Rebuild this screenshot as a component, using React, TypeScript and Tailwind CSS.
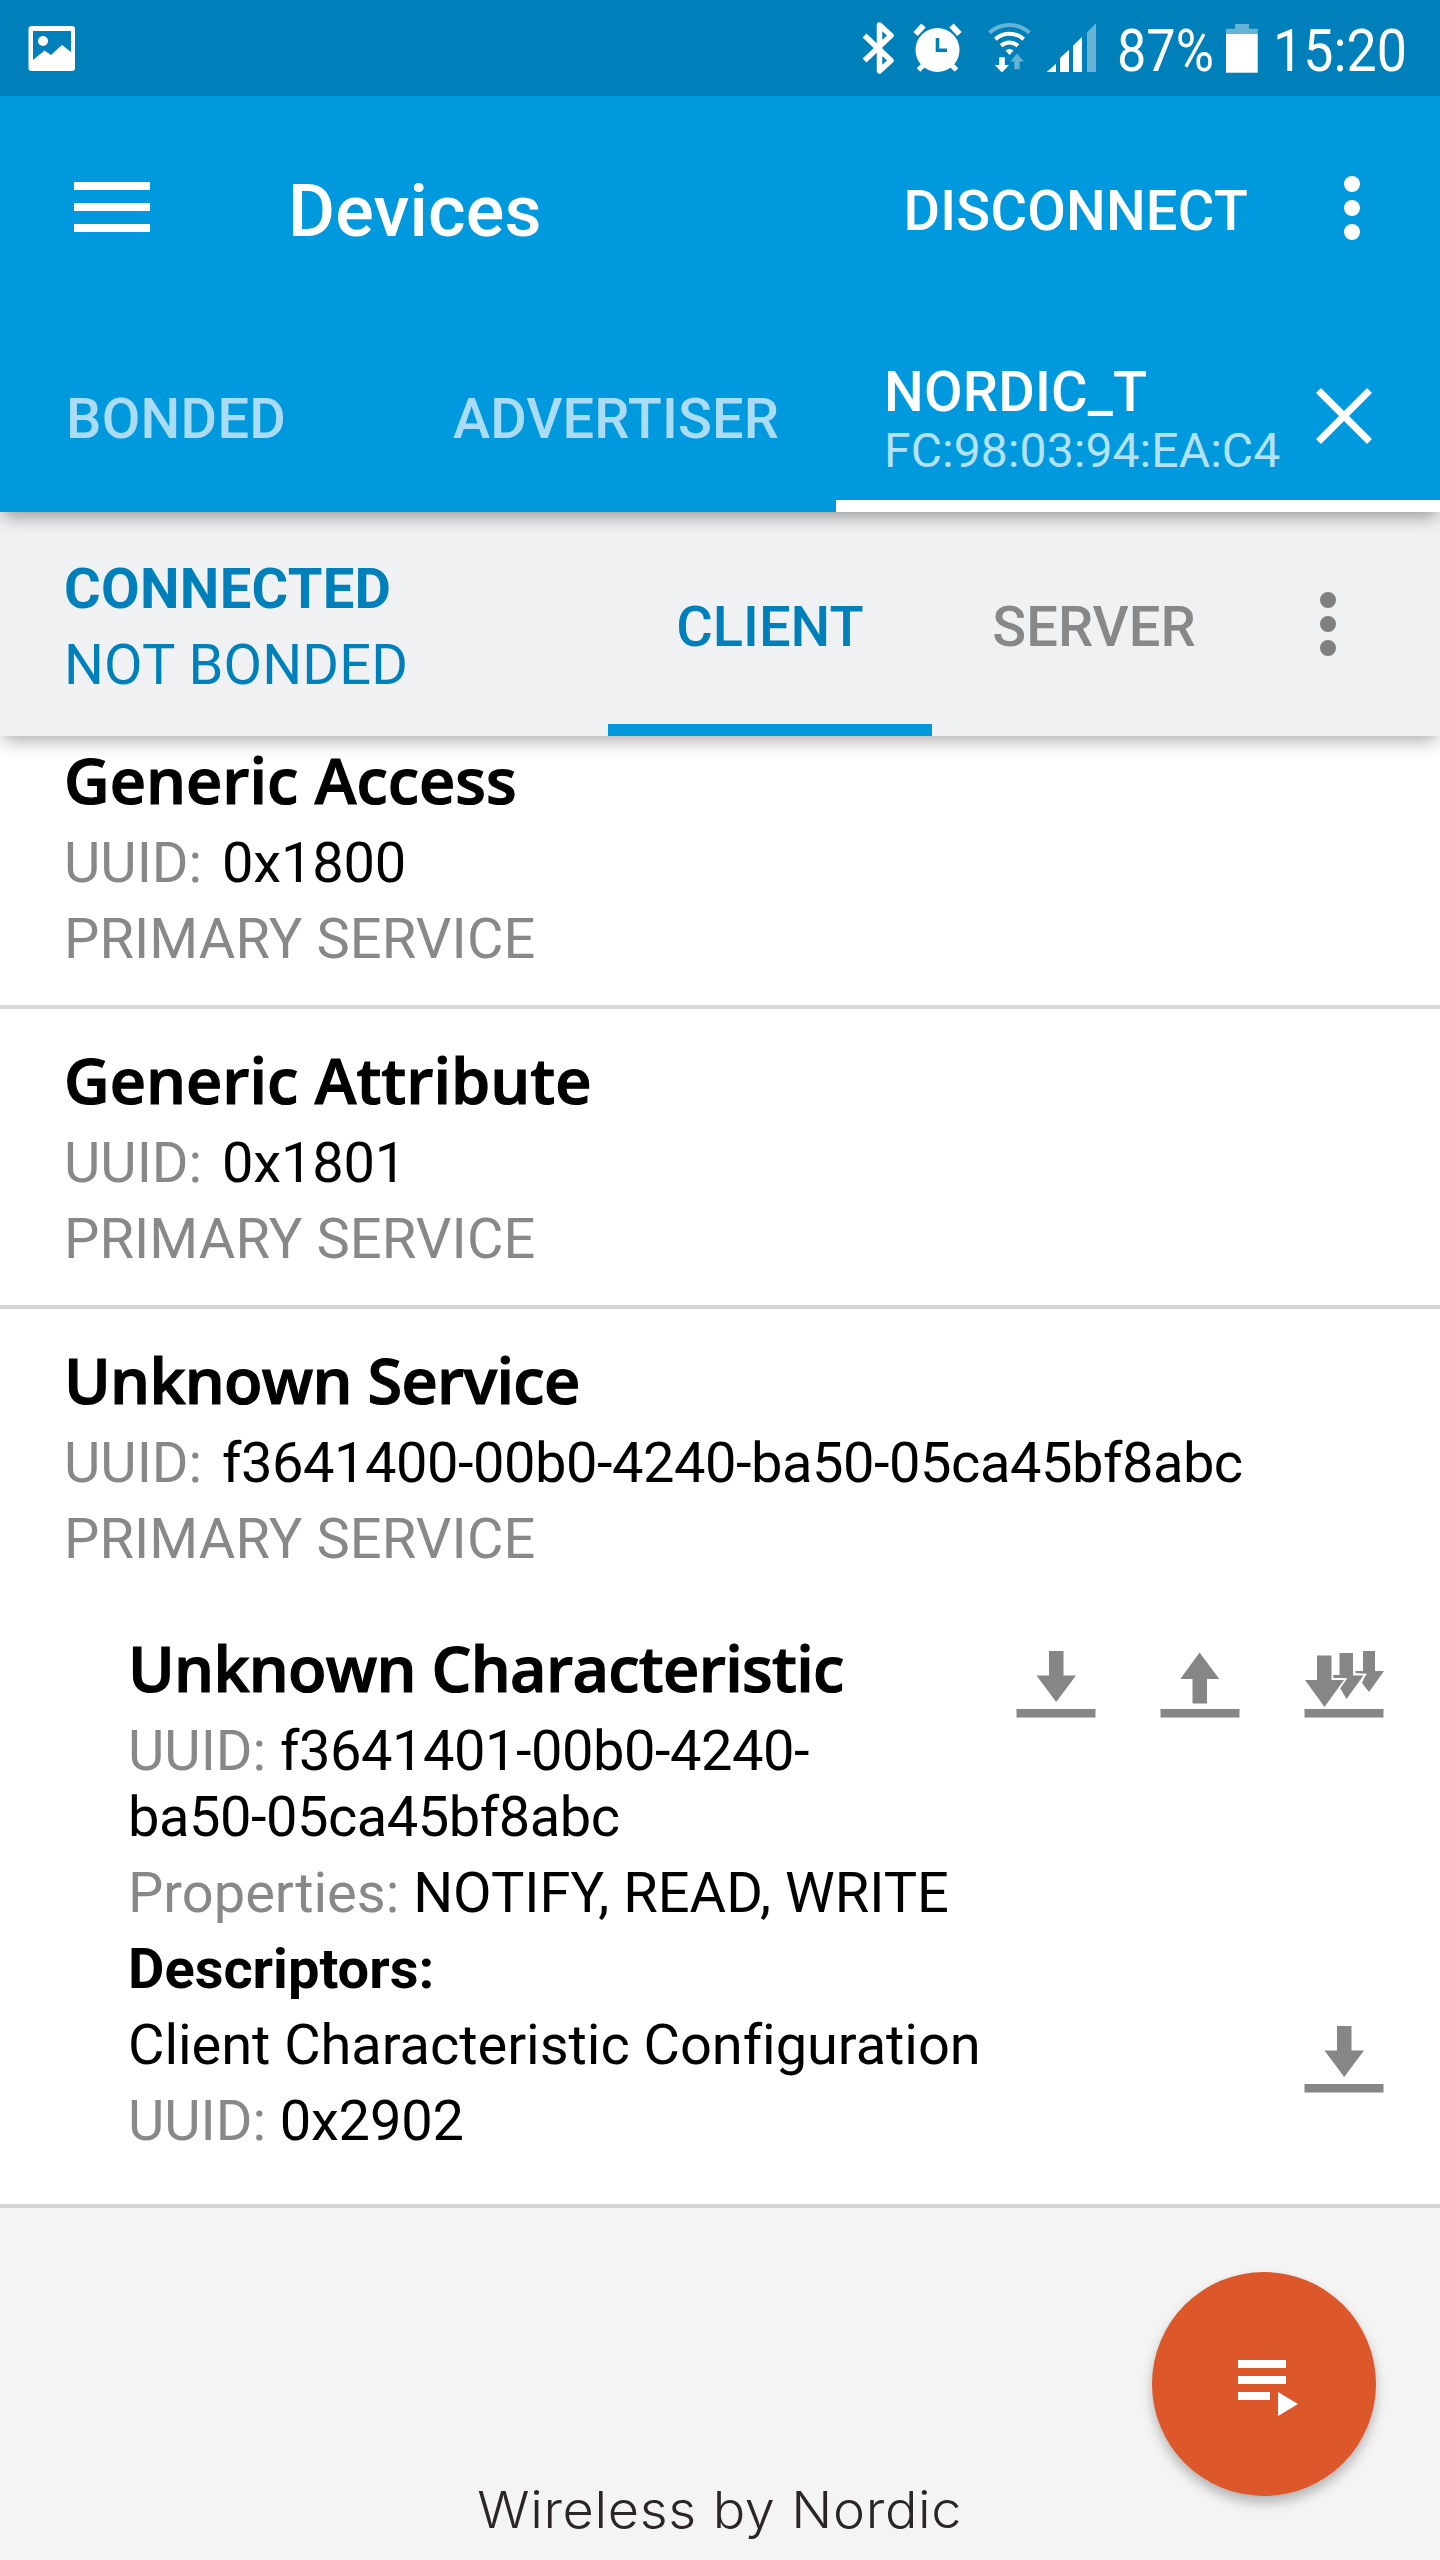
import type { ReactNode } from 'react'

const FAINT = '#66b3d5'

function PictureIcon() {
  return (
    <svg className="ml-7 h-[48px] w-[48px]" viewBox="28 24 48 48">
      <rect x="28.5" y="26" width="46.5" height="45" rx="3" fill="#fff" />
      <path d="M33 31H71V52L62 45L51 55L44.5 50.5L33 60Z" fill="#0080ba" />
      <circle cx="43" cy="41" r="5" fill="#fff" />
    </svg>
  )
}

function StatusIcons() {
  return (
    <div className="flex items-center">
      <svg className="h-[56px] w-[36px]" viewBox="862 21 36 56" fill="none" stroke="#fff" strokeWidth="5.5" strokeLinejoin="round">
        <path d="M864.5 36.5L891 61.5L879.5 72V26L891 36.5L864.5 61.5" />
      </svg>
      <svg className="ml-[14px] h-[56px] w-[52px]" viewBox="912 21 52 56" fill="none">
        <circle cx="937.5" cy="51" r="22" fill="#fff" />
        <path d="M915.5 35L923.5 26.5M951.5 26.5L959.5 35" stroke="#fff" strokeWidth="6" />
        <path d="M918.5 71L926 63.5M956.5 71L949 63.5" stroke="#fff" strokeWidth="5" />
        <path d="M937.5 39V51.3H947" stroke="#0080ba" strokeWidth="3.6" />
      </svg>
      <svg className="ml-[20px] h-[56px] w-[50px]" viewBox="984 21 50 56" fill="none" strokeWidth="4">
        <path d="M989.5 33.7A30 30 0 0 1 1029.5 33.7" stroke={FAINT} />
        <path d="M995.3 40.2A21.2 21.2 0 0 1 1023.7 40.2M1001.1 46.7A12.5 12.5 0 0 1 1017.9 46.7" stroke="#fff" />
        <path d="M1009.5 56L1005.5 51.5A6 6 0 0 1 1013.5 51.5Z" fill="#fff" />
        <path d="M999.2 58.3H1004.8V66H1009L1002 73.5L994.7 66H999.2Z" fill="#fff" />
        <path d="M1014.3 70.3V62.5H1010.3L1017 54.7L1024 62.5H1019.7V70.3Z" fill={FAINT} />
      </svg>
      <svg className="ml-[12px] h-[56px] w-[50px]" viewBox="1046 21 50 56" fill="#fff">
        <path d="M1046.7 73L1056 64.7V73ZM1060 73V59L1069 50.7V73ZM1073 73V46.7L1082 38V73Z" />
        <path d="M1087 73V33.3L1096 24.3V73Z" fill={FAINT} />
      </svg>
      <div className="ml-[21px] w-[97px] pt-[7px]">
        <span className="inline-block origin-left scale-x-[0.87] text-[60px] leading-[80px]">87%</span>
      </div>
      <svg className="ml-[12px] h-[56px] w-[32px]" viewBox="1226 21 32 56">
        <path d="M1235 25H1249V29.7H1257.7V35H1226V29.7H1235Z" fill={FAINT} />
        <rect x="1226" y="35" width="31.7" height="38.7" fill="#fff" />
      </svg>
      <div className="ml-[15px] w-[134px] pt-[7px]">
        <span className="inline-block origin-left scale-x-[0.896] text-[60px] leading-[80px]">15:20</span>
      </div>
    </div>
  )
}

function Dots({ className }: { className: string }) {
  return (
    <svg className={className} viewBox="0 0 16 64" fill="currentColor">
      <circle cx="8" cy="8" r="8" />
      <circle cx="8" cy="32" r="8" />
      <circle cx="8" cy="56" r="8" />
    </svg>
  )
}

function ReadIcon() {
  return (
    <svg className="h-[68px] w-[80px]" viewBox="0 0 80 68" fill="#868686">
      <path d="M33 1H47.5V25.5H60L40.2 52L20.5 25.5H33Z" />
      <rect x="0.5" y="59" width="79" height="8.5" />
    </svg>
  )
}

function WriteIcon() {
  return (
    <svg className="h-[68px] w-[80px]" viewBox="0 0 80 68" fill="#868686">
      <path d="M32.5 53.5H47V29H59.3L39.6 2.5L20.3 29H32.5Z" />
      <rect x="0.5" y="59" width="79" height="8.5" />
    </svg>
  )
}

function NotifyIcon() {
  return (
    <svg className="h-[68px] w-[80px]" viewBox="0 0 80 68" fill="#868686">
      <path d="M59 1H71V21H80L65 42L58 33L62 24L51.5 23V21H59Z" />
      <path d="M35.5 3V25H29V28H41L36 38L42.5 49L59.5 25.5H49V3Z" stroke="#fff" strokeWidth="3.5" paintOrder="stroke" />
      <path d="M13 5.5H27.5V30H40L20.5 57L1 30H13Z" stroke="#fff" strokeWidth="3.5" paintOrder="stroke" />
      <rect x="0.5" y="59" width="79" height="8.5" />
    </svg>
  )
}

function Title({ children, tight = false }: { children: ReactNode; tight?: boolean }) {
  return (
    <h2
      className={
        "whitespace-nowrap font-['Open_Sans',sans-serif] text-[63px] font-semibold leading-[76px] [-webkit-text-stroke:1.2px_black] " +
        (tight ? 'tracking-[-0.7px]' : 'tracking-normal')
      }
    >
      {children}
    </h2>
  )
}

function Service({ name, uuid, tight, children }: { name: string; uuid: string; tight?: boolean; children?: ReactNode }) {
  return (
    <section className="border-b-4 border-[#d6d6d6] pl-16 pt-[33px]">
      <Title tight={tight}>{name}</Title>
      <p className="mt-[7px] leading-[76px]">
        <span className="text-[#888888]">UUID: </span>
        <span className={tight ? 'ml-[6px] tracking-[-0.47px]' : 'ml-[6px] tracking-[-0.2px]'}>{uuid}</span>
      </p>
      <p className="leading-[76px] tracking-[0.1px] text-[#888888]">PRIMARY SERVICE</p>
      {children ?? <div className="h-[28px]" />}
    </section>
  )
}

function Characteristic() {
  return (
    <div className="pb-[45px] pl-16 pr-14 pt-[53px]">
      <div className="flex justify-between">
        <div>
          <Title tight>Unknown Characteristic</Title>
          <p className="mt-[12px] leading-[66px] tracking-[-0.47px]">
            <span className="tracking-normal text-[#888888]">UUID: </span>f3641401-00b0-4240-
            <br />
            ba50-05ca45bf8abc
          </p>
        </div>
        <div className="flex gap-16 pt-[20px]">
          <ReadIcon />
          <WriteIcon />
          <NotifyIcon />
        </div>
      </div>
      <p className="mt-[5px] leading-[76px]">
        <span className="text-[#888888]">Properties: </span>NOTIFY, READ, WRITE
      </p>
      <p className="font-bold leading-[76px]">Descriptors:</p>
      <div className="flex justify-between">
        <div className="leading-[76px] tracking-[-0.05px]">
          <p>Client Characteristic Configuration</p>
          <p>
            <span className="text-[#888888]">UUID: </span>
            <span className="tracking-[-0.2px]">0x2902</span>
          </p>
        </div>
        <div className="pt-[18px]">
          <ReadIcon />
        </div>
      </div>
    </div>
  )
}

export default function App() {
  return (
    <div className="relative flex h-[2560px] w-[1440px] flex-col overflow-hidden bg-[#f4f4f4] font-[Roboto,sans-serif] text-[56px] text-black">
      <header className="relative z-20 bg-[#0099dd] text-white shadow-[0_8px_16px_-3px_rgba(0,0,0,0.36)]">
        <div className="flex h-24 items-center justify-between bg-[#0080ba] pr-[33px]">
          <PictureIcon />
          <StatusIcons />
        </div>
        <div className="flex h-56 items-center pl-[74px] pr-20">
          <div className="mb-[2px] flex w-[76px] flex-col gap-[13px]">
            <div className="h-2 bg-white" />
            <div className="h-2 bg-white" />
            <div className="h-2 bg-white" />
          </div>
          <h1 className="ml-[138px] pt-[7px] text-[72px] font-medium leading-[80px] tracking-[0.2px]">Devices</h1>
          <span className="ml-auto pt-[6px] font-medium leading-[76px] tracking-[0.2px]">DISCONNECT</span>
          <Dots className="ml-[96px] h-16 w-4" />
        </div>
        <nav className="flex h-48">
          <div className="w-[453px] pl-[66px] pt-[61px] font-medium leading-[76px] tracking-[0.3px] text-[#abdcf5]">BONDED</div>
          <div className="w-[383px] pt-[61px] font-medium leading-[76px] tracking-[0.1px] text-[#abdcf5]">ADVERTISER</div>
          <div className="flex flex-1 border-b-[12px] border-white pl-12 pr-[68px] pt-[40px]">
            <div>
              <p className="font-medium leading-[64px] tracking-[0.2px]">NORDIC_T</p>
              <p className="text-[48px] leading-[54px] tracking-[0.1px] text-[#b3e1f5]">FC:98:03:94:EA:C4</p>
            </div>
            <svg className="ml-auto mt-[28px] h-[56px] w-[56px]" viewBox="0 0 56 56" fill="none" stroke="#fff" strokeWidth="7">
              <path d="M2.5 2.5L53.5 53.5M53.5 2.5L2.5 53.5" />
            </svg>
          </div>
        </nav>
      </header>

      <div className="relative z-10 flex h-56 bg-[#eff1f3] text-[#0080ba] shadow-[0_8px_16px_-3px_rgba(0,0,0,0.32)]">
        <div className="w-[608px] pl-16 pt-[39px] leading-[76px]">
          <p className="font-bold tracking-[0.35px]">CONNECTED</p>
          <p className="tracking-[0.15px]">NOT BONDED</p>
        </div>
        <div className="w-[324px] border-b-[12px] border-[#0099dd] pt-[77px] text-center font-medium leading-[76px]">CLIENT</div>
        <div className="w-[324px] pt-[77px] text-center font-medium leading-[76px] text-[#888888]">SERVER</div>
        <Dots className="ml-16 mt-20 h-16 w-4 text-[#808080]" />
      </div>

      <main className="-mt-[27px] bg-white">
        <Service name="Generic Access" uuid="0x1800" />
        <Service name="Generic Attribute" uuid="0x1801" />
        <Service name="Unknown Service" uuid="f3641400-00b0-4240-ba50-05ca45bf8abc" tight>
          <Characteristic />
        </Service>
      </main>

      <footer className="flex flex-1 items-end justify-center pb-[18px]">
        <p className="scale-x-[1.06] font-[Inter,sans-serif] text-[51px] font-light leading-[64px] tracking-[0.6px] text-[#2b2528]">
          Wireless by Nordic
        </p>
      </footer>

      <button className="absolute bottom-16 right-16 flex size-56 items-center justify-center rounded-full bg-[#dc582a] shadow-[0_7px_12px_rgba(0,0,0,0.26)]">
        <svg className="size-24" viewBox="0 0 96 96" fill="#fff">
          <path d="M22 24H70V32H22ZM22 40H70V48H22ZM22 56H54V64H22ZM62 56L82 68L62 80Z" />
        </svg>
      </button>
    </div>
  )
}
